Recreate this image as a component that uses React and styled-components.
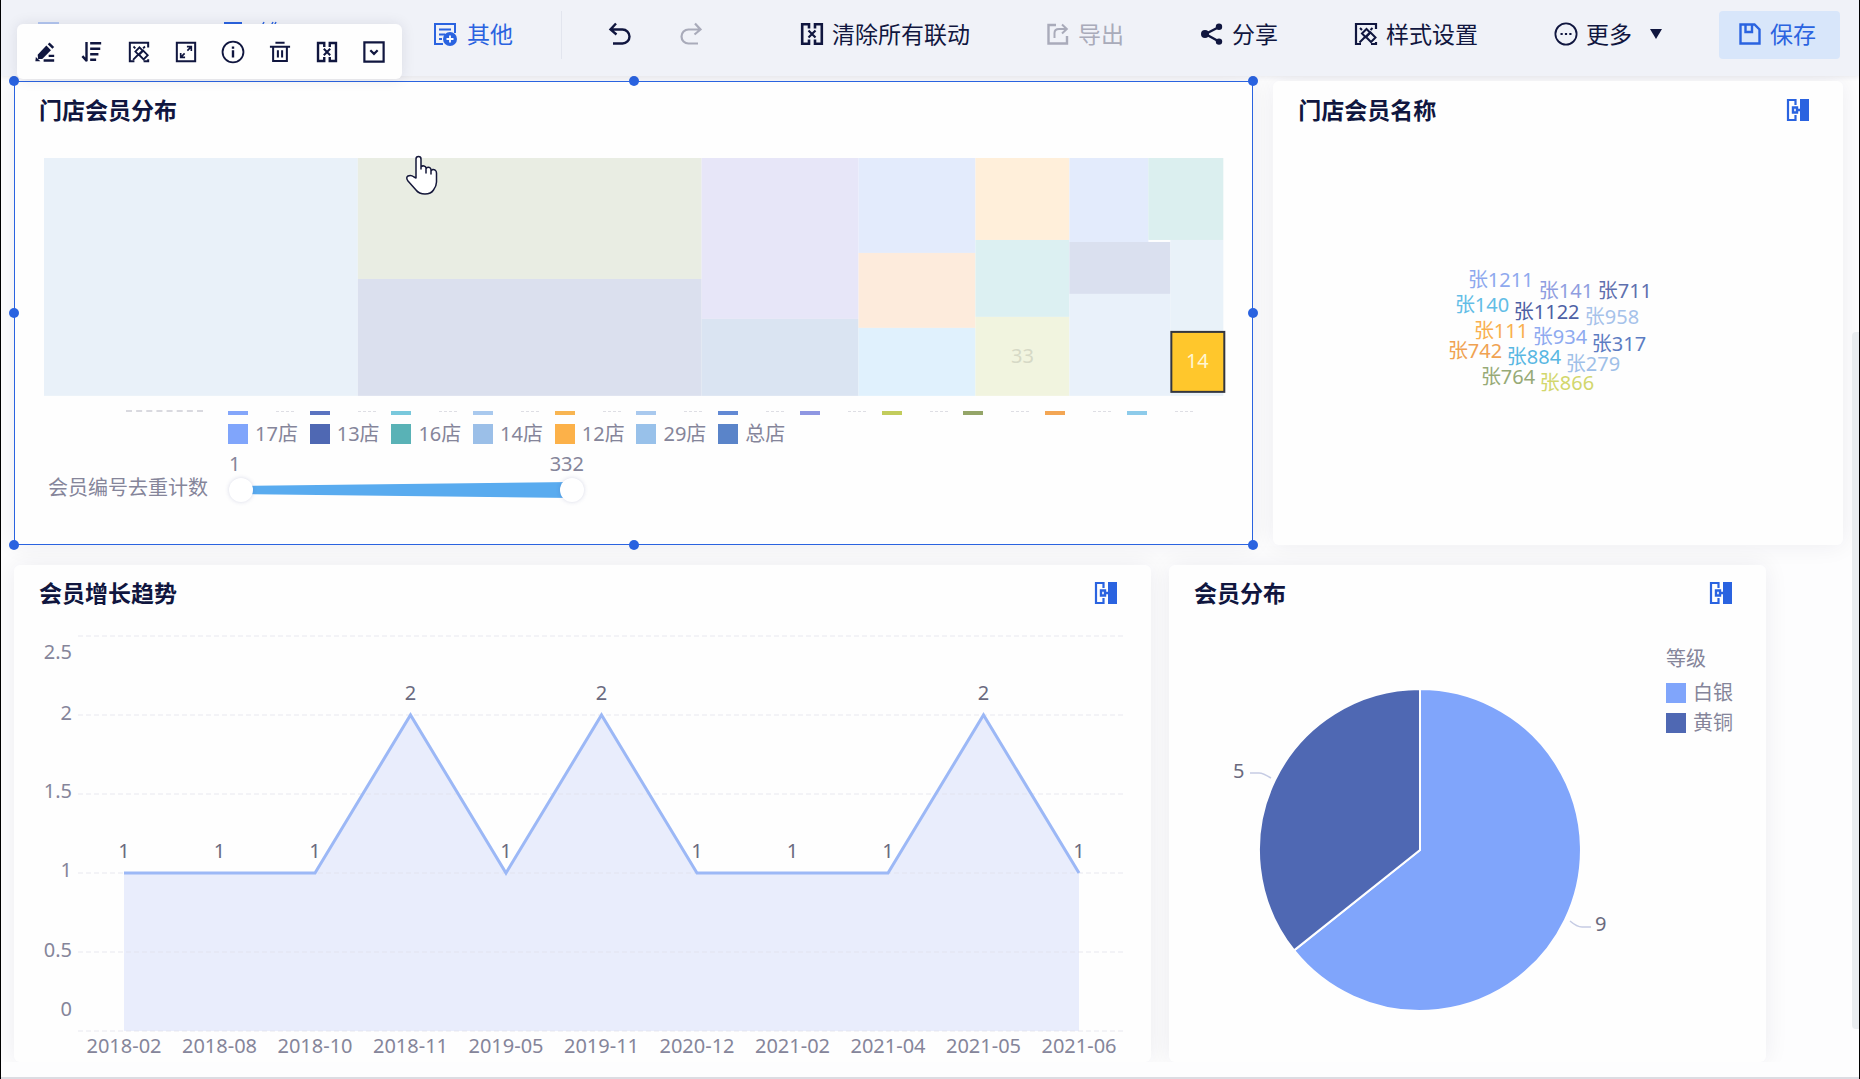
import React, { useState } from 'react'
import styled, { createGlobalStyle, css } from 'styled-components'

const NAVY = '#10163f'
const BLUE = '#2a63e0'
const FONT = `'Noto Sans', 'Noto Sans CJK SC', sans-serif`

const GlobalStyle = createGlobalStyle`
  * {
    box-sizing: border-box;
  }
  body {
    margin: 0;
    background: #fdfdfe;
    color: ${NAVY};
    font-family: ${FONT};
    font-size: 20px;
  }
  button {
    font-family: inherit;
  }
`

const Frame = styled.div`
  position: relative;
  display: flex;
  flex-direction: column;
  min-height: 100vh;
  border: solid #000;
  border-width: 0 1px;
  box-shadow: inset 0 -2px 0 #dcdce2;
`

/* toolbar */

const Toolbar = styled.header`
  position: relative;
  z-index: 1;
  display: flex;
  align-items: center;
  height: 76px;
  padding: 0 19px 6px 35px;
  background: #f0f2f8;
  box-shadow: 0 2px 4px rgba(30, 30, 70, 0.07);
`

const InsertGroup = styled.div`
  display: grid;
  grid-template-columns: 186px 211px auto;
`

const ActionGroup = styled.div`
  display: flex;
  align-items: center;
  gap: 38px;
  margin-left: auto;
`

const HistoryGroup = styled.div`
  display: flex;
  align-items: center;
  gap: 49px;
  padding: 0 39px 0 45px;
  border-left: 1px solid #e2e5ee;
`

const ToolButton = styled.button`
  display: flex;
  align-items: center;
  gap: ${p => (p.$flat ? 10 : 8)}px;
  height: 48px;
  padding: 0 ${p => (p.$flat ? 0 : 19)}px 2px;
  border: 0;
  border-radius: 4px;
  background: none;
  color: ${p => (p.$accent ? BLUE : NAVY)};
  font-size: 23px;
  line-height: 28px;
  white-space: nowrap;
  cursor: pointer;

  &:disabled {
    color: #a9abba;
    cursor: default;
  }
  ${p =>
    p.$filled &&
    css`
      background: #d8e6fa;
      padding-right: 24px;
    `}
`

const Svg = styled.svg`
  display: block;
  flex: none;
  overflow: visible;
  fill: none;
  stroke: currentColor;
  stroke-width: 2;
`

const Icon = ({ children, size = 24 }) => (
  <Svg width={size} height={size} viewBox='0 0 24 24' aria-hidden='true'>
    {children}
  </Svg>
)

const UnlinkIcon = ({ size }) => (
  <Icon size={size}>
    <path d='M9 6.5V2.2H2.2V21.8H9V17.5M15 6.5V2.2H21.8V21.8H15V17.5' strokeWidth='2.6' />
    <path d='M8.5 8.5L15.5 15.5M15.5 8.5L8.5 15.5' strokeWidth='2.2' />
  </Icon>
)

const StyleIcon = ({ size }) => (
  <Icon size={size}>
    <path d='M22 7V2H2V22H7M17 22H22V20' strokeWidth='2.2' />
    <path d='M8 11.5L12.5 7L16 10.5L11.5 15Z' />
    <path d='M12 15L16.5 10.5L21.5 15.5L17 20Z' />
    <path d='M11 15L5.5 20.5M16.5 8L18.5 6M6 6L8 8' />
  </Icon>
)

const OtherIcon = () => (
  <Icon>
    <path d='M22 11V2H2V22H10M6 7.5H18M6 12.5H12M6 17H9' />
    <circle cx='17' cy='17' r='7' fill='currentColor' stroke='none' />
    <path d='M17 13.5V20.5M13.5 17H20.5' stroke='#fff' strokeWidth='1.8' />
  </Icon>
)

const UndoIcon = () => (
  <Icon>
    <path d='M9 1.5L3.5 7.5L9.5 12.5M4 7.5H15.5A6.7 6.7 0 0 1 15.5 21.5H6' strokeWidth='2.4' />
  </Icon>
)

const RedoIcon = () => (
  <Icon>
    <path d='M15 1.5L20.5 7.5L14.5 12.5M20 7.5H8.5A6.7 6.7 0 0 0 8.5 21.5H18' strokeWidth='2.2' />
  </Icon>
)

const ExportIcon = () => (
  <Icon>
    <path d='M10 3H2.5V21.5H21V14' strokeWidth='2.4' />
    <path d='M8.5 16V11Q8.5 7 13 7H20M16 2.5L20.8 7L16 11.5' />
  </Icon>
)

const ShareIcon = () => (
  <Icon>
    <path d='M19 5L5.5 12L19 19.5' strokeWidth='2.4' />
    <g fill='currentColor' stroke='none'>
      <circle cx='19' cy='4.8' r='3.2' />
      <circle cx='5' cy='12' r='4' />
      <circle cx='19' cy='19.6' r='3.2' />
    </g>
  </Icon>
)

const MoreIcon = () => (
  <Icon>
    <circle cx='12' cy='12' r='10.6' strokeWidth='1.8' />
    <path d='M6.5 12H8.7M10.9 12H13.1M15.3 12H17.5' strokeWidth='2.2' />
  </Icon>
)

const SaveIcon = () => (
  <Icon>
    <path d='M2.5 2.5H16.5L21.5 7.5V21.5H2.5Z' strokeWidth='2.4' />
    <path d='M7.5 3V10H14V3' strokeWidth='2.4' />
  </Icon>
)

const LinkedIcon = () => (
  <Icon>
    <path d='M9.5 7V2H2V22H9.5V17' strokeWidth='2.2' />
    <path d='M7 9.5H11V14.5H7ZM11 12H15' strokeWidth='2.4' />
    <path d='M14 1H23V23H14Z' fill='currentColor' stroke='none' />
  </Icon>
)

const Caret = styled.span`
  margin-left: 10px;
  border: 6px solid transparent;
  border-top: 10px solid currentColor;
  border-bottom: 0;
`

/* floating menu of the selected card */

const FloatMenu = styled.div`
  position: absolute;
  z-index: 3;
  top: 24px;
  left: 16px;
  display: flex;
  gap: 25px;
  padding: 17px 17px 16px;
  border-radius: 6px;
  background: #fefefe;
  box-shadow: 0 0 14px rgba(30, 30, 60, 0.1);
`

const MenuButton = styled.button`
  padding: 0;
  border: 0;
  background: none;
  color: ${NAVY};
  cursor: pointer;
`

const MENU = [
  {
    label: '编辑',
    icon: (
      <g fill='currentColor' stroke='none'>
        <path d='M4 15L13.5 5L18.5 10L9 19.5L4.5 19.5Z' />
        <path d='M15 3.5L17 1.5L22 6.5L20 8.5Z' />
        <path d='M2 17.5L7 22H1.5Z' />
        <path d='M16 15H22V17.5H16ZM10.5 20H22V22.5H10.5Z' />
      </g>
    )
  },
  {
    label: '排序',
    icon: (
      <>
        <path d='M6 1V22M6.5 22L1.5 16.5' strokeWidth='2.6' />
        <path d='M10 2.5H22M10 8.5H21M10 14.5H19M10 20.5H16.5' strokeWidth='2.6' />
      </>
    )
  },
  { label: '样式', node: <StyleIcon size={22} /> },
  {
    label: '放大',
    icon: (
      <>
        <path d='M2 2H22V22H2Z' strokeWidth='2.2' />
        <path d='M13 6.2H17.8V11M17.5 6.5L13.5 10.5M11 17.8H6.2V13M6.5 17.5L10.5 13.5' strokeWidth='1.8' />
      </>
    )
  },
  {
    label: '信息',
    icon: (
      <>
        <circle cx='12' cy='12' r='11.4' />
        <path d='M12 10V18M12 6V8.4' strokeWidth='2.6' />
      </>
    )
  },
  {
    label: '删除',
    icon: (
      <path d='M7 2H17M1 6.2H23M4.5 6.5V21.8H19.5V6.5M9.7 10V18M14.3 10V18' strokeWidth='2.2' />
    )
  },
  { label: '清除联动', node: <UnlinkIcon size={22} /> },
  {
    label: '展开',
    icon: (
      <>
        <path d='M1.5 1.5H22.5V22.5H1.5Z' strokeWidth='2.4' />
        <path d='M8 10L12 14L16 10' strokeWidth='2.4' />
      </>
    )
  }
]

/* cards */

const Canvas = styled.main`
  display: flex;
  flex-direction: column;
  gap: 20px;
  padding: 5px 16px 0 13px;
  margin-bottom: 17px;
  overflow: hidden;
`

const Row = styled.div`
  display: grid;
  grid-template-columns: ${p => p.$columns};
  gap: ${p => p.$gap}px;
  margin-right: ${p => p.$indent || 0}px;
`

const CardBox = styled.section`
  position: relative;
  min-width: 0;
  border-radius: 6px;
  background: #fefefe;
  box-shadow: 0 0 24px rgba(20, 20, 50, 0.07);
`

const CardHead = styled.div`
  display: flex;
  align-items: center;
  justify-content: space-between;
  height: 57px;
  padding: 0 33px 0 25px;
`

const CardTitle = styled.h2`
  margin: 0;
  font-size: 23px;
  line-height: 32px;
  font-weight: 700;
`

const LinkedButton = styled(MenuButton)`
  color: ${BLUE};
`

const Selection = styled.div`
  position: absolute;
  inset: 0;
  outline: 1px solid ${BLUE};
  outline-offset: -1px;
  pointer-events: none;
`

const Handle = styled.i`
  position: absolute;
  left: ${p => p.$x};
  top: ${p => p.$y};
  width: 10px;
  height: 10px;
  margin: -5px;
  border-radius: 50%;
  background: ${BLUE};
`

const HANDLES = [
  ['0%', '0%'],
  ['50%', '0%'],
  ['100%', '0%'],
  ['0%', '50%'],
  ['100%', '50%'],
  ['0%', '100%'],
  ['50%', '100%'],
  ['100%', '100%']
]

const Card = ({ title, linked, selected, children }) => (
  <CardBox>
    <CardHead>
      <CardTitle>{title}</CardTitle>
      {linked && (
        <LinkedButton type='button' aria-label='联动'>
          <LinkedIcon />
        </LinkedButton>
      )}
    </CardHead>
    {children}
    {selected && (
      <Selection>
        {HANDLES.map(([x, y]) => (
          <Handle key={x + y} $x={x} $y={y} />
        ))}
      </Selection>
    )}
  </CardBox>
)

const Chart = styled.svg`
  display: block;
  width: 100%;
  height: auto;
  overflow: visible;
  font-family: ${FONT};
  font-size: 20px;
`

/* treemap */

const MapBody = styled.div`
  padding: 20px 30px 43px;
`

// x, y, width, height, colour
const TILES = [
  [0, 0, 314, 238, '#e9f1f9'],
  [314, 0, 344, 121, '#e9ede3'],
  [314, 121, 344, 117, '#dbe0ee'],
  [658, 0, 157, 161, '#e7e6f8'],
  [658, 161, 157, 77, '#dae4f2'],
  [815, 0, 117, 95, '#e3ebfc'],
  [815, 95, 117, 75, '#fdebdc'],
  [815, 170, 117, 68, '#e0f1fd'],
  [932, 0, 94, 82, '#ffefda'],
  [932, 82, 94, 77, '#dcf0f2'],
  [932, 159, 94, 79, '#f1f4df'],
  [1026, 0, 79, 84, '#e3ebfc'],
  [1105, 0, 75, 82, '#dbefef'],
  [1026, 84, 101, 52, '#dae0ef'],
  [1026, 136, 101, 102, '#e9f1fa'],
  [1127, 82, 53, 156, '#e9f2f9']
]

const Treemap = () => (
  <Chart viewBox='0 0 1180 238'>
    {TILES.map(([x, y, w, h, fill]) => (
      <rect key={`${x}-${y}`} x={x} y={y} width={w} height={h} fill={fill} />
    ))}
    <text x='979' y='205' textAnchor='middle' fill='#d6d9c6'>
      33
    </text>
    <rect x='1128' y='174' width='53' height='60' fill='#ffc72c' stroke='#33363f' strokeWidth='2' />
    <text x='1154' y='210' textAnchor='middle' fill='#fff6d2'>
      14
    </text>
  </Chart>
)

const LegendGrid = styled.div`
  display: grid;
  grid-template-columns: repeat(12, 1fr);
  margin: 0 15px 0 184px;
`

const ClippedLegend = styled(LegendGrid)`
  position: relative;
  height: 4px;
  margin-top: 15px;
  margin-bottom: 7px;
`

const Sliver = styled.span`
  position: relative;
  width: 20px;
  background: ${p => p.$color};

  &::after {
    content: '';
    position: absolute;
    left: 48px;
    top: 0;
    width: 18px;
    border-top: 1px dashed #dedee4;
  }
`

const ClippedTitle = styled.i`
  position: absolute;
  top: -1px;
  left: -102px;
  width: 77px;
  border-top: 2px dashed #d9d9df;
`

const LegendItem = styled.span`
  display: flex;
  align-items: center;
  gap: 7px;
  color: #85859a;
  line-height: 24px;
  white-space: nowrap;
`

const Swatch = styled.i`
  flex: none;
  width: 20px;
  height: 20px;
  background: ${p => p.$color};
`

const CLIPPED = [
  '#84a6fa',
  '#5a73c0',
  '#79c8dc',
  '#a9c9ee',
  '#f8b552',
  '#a9c9ee',
  '#6289d4',
  '#8f97e2',
  '#c2cc5c',
  '#94a568',
  '#f3a654',
  '#8dcbea'
]

const SHOPS = [
  ['17店', '#80a5fb'],
  ['13店', '#4f68b3'],
  ['16店', '#59b2b6'],
  ['14店', '#9bbfe8'],
  ['12店', '#fcb149'],
  ['29店', '#98c1ea'],
  ['总店', '#5a84c9']
]

const RangeRow = styled.div`
  display: flex;
  align-items: flex-end;
  margin: 4px 0 0 4px;
  color: #85859a;
  line-height: 28px;
`

const RangeLabel = styled.span`
  width: 181px;
`

const RangeScale = styled.div`
  display: flex;
  justify-content: space-between;
`

const RangeTrack = styled.div`
  position: relative;
  width: 355px;
  height: 24px;
`

const RangeInput = styled.input`
  position: absolute;
  inset: 0;
  width: 100%;
  height: 24px;
  margin: 0;
  appearance: none;
  background: none;
  pointer-events: none;

  &::-webkit-slider-thumb {
    appearance: none;
    width: 24px;
    height: 24px;
    border-radius: 50%;
    background: #fff;
    box-shadow: 0 0 4px rgba(60, 70, 140, 0.2);
    pointer-events: auto;
    cursor: pointer;
  }
`

function CountRange() {
  const [low, setLow] = useState(1)
  const [high, setHigh] = useState(332)
  return (
    <RangeRow>
      <RangeLabel id='count-label'>会员编号去重计数</RangeLabel>
      <div>
        <RangeScale>
          <span>{low}</span>
          <span>{high}</span>
        </RangeScale>
        <RangeTrack>
          <Svg width='355' height='24' viewBox='0 0 355 24'>
            <path d='M12 8L343 4V20L12 16Z' fill='#59abef' stroke='none' />
          </Svg>
          <RangeInput
            type='range'
            min='1'
            max='332'
            value={low}
            aria-labelledby='count-label'
            onChange={e => setLow(Math.min(+e.target.value, high))}
          />
          <RangeInput
            type='range'
            min='1'
            max='332'
            value={high}
            aria-labelledby='count-label'
            onChange={e => setHigh(Math.max(+e.target.value, low))}
          />
        </RangeTrack>
      </div>
    </RangeRow>
  )
}

/* word cloud */

const WORDS = [
  ['张1211', 195, 149, '#8ea9ee'],
  ['张141', 266, 160, '#8f9de0'],
  ['张711', 325, 160, '#5f70ae'],
  ['张140', 182, 174, '#62bde6'],
  ['张1122', 241, 181, '#4d60a4'],
  ['张958', 312, 186, '#a6c2ea'],
  ['张111', 201, 200, '#f9b04e'],
  ['张934', 260, 206, '#8eaaf0'],
  ['张317', 319, 213, '#5c7cc2'],
  ['张742', 175, 220, '#f0a252'],
  ['张884', 234, 226, '#58b7e2'],
  ['张279', 293, 233, '#9fc0e8'],
  ['张764', 208, 246, '#97aa76'],
  ['张866', 267, 252, '#d2d76c']
]

const WordCloud = () => (
  <Chart viewBox='0 0 570 406'>
    {WORDS.map(([word, x, y, fill]) => (
      <text key={word} x={x} y={y} fill={fill}>
        {word}
      </text>
    ))}
  </Chart>
)

/* trend */

const TREND = [
  ['2018-02', 1],
  ['2018-08', 1],
  ['2018-10', 1],
  ['2018-11', 2],
  ['2019-05', 1],
  ['2019-11', 2],
  ['2020-12', 1],
  ['2021-02', 1],
  ['2021-04', 1],
  ['2021-05', 2],
  ['2021-06', 1]
]

// value, label baseline
const TICKS = [
  [2.5, 37],
  [2, 98],
  [1.5, 176],
  [1, 255],
  [0.5, 335],
  [0, 394]
]

const trendX = i => 110 + (i * 955) / 10
const trendY = v => 409 - v * 158

function TrendChart() {
  const line = TREND.map(([, v], i) => `${trendX(i)},${trendY(v)}`).join(' ')
  return (
    <Chart viewBox='0 0 1137 440'>
      <polygon points={`110,409 ${line} 1065,409`} fill='#e9edfc' />
      {TICKS.map(([v, base]) => (
        <g key={v}>
          <line x1='64' x2='1111' y1={trendY(v)} y2={trendY(v)} stroke='#dfe0ea' strokeOpacity='.7' strokeDasharray='5 3' />
          <text x='58' y={base} textAnchor='end' fill='#85859a'>
            {v}
          </text>
        </g>
      ))}
      <polyline points={line} fill='none' stroke='#9cb8f6' strokeWidth='3' />
      {TREND.map(([date, v], i) => (
        <g key={date} textAnchor='middle'>
          <text x={trendX(i)} y={trendY(v) - 15} fill='#6a6a7e'>
            {v}
          </text>
          <text x={trendX(i)} y='431' fill='#85859a'>
            {date}
          </text>
        </g>
      ))}
    </Chart>
  )
}

/* pie */

const PieBody = styled.div`
  display: grid;
  grid-template-columns: 497fr 100fr;
`

const PieLegend = styled.div`
  display: flex;
  flex-direction: column;
  gap: 6px;
  padding-top: 25px;
  color: #85859a;
  line-height: 24px;
`

const PieLegendTitle = styled.span`
  margin-bottom: 4px;
`

const PieChart = () => (
  <Chart viewBox='0 0 497 440'>
    <g stroke='#fefefe' strokeWidth='2'>
      <path d='M251 228V67A161 161 0 1 1 125.1 328.4Z' fill='#80a5fb' />
      <path d='M251 228L125.1 328.4A161 161 0 0 1 251 67Z' fill='#4f68b3' />
    </g>
    <path d='M81 151H90Q94 151 102 156M401 299Q408 305 413 305H422' fill='none' stroke='#c6cce4' strokeWidth='1.5' />
    <text x='64' y='156' fill='#6a6a7e'>
      5
    </text>
    <text x='426' y='309' fill='#6a6a7e'>
      9
    </text>
  </Chart>
)

const Scrollbar = styled.div`
  position: absolute;
  right: 0;
  top: 332px;
  bottom: 50px;
  width: 7px;
  border-radius: 4px 0 0 4px;
  background: #e9ecef;
`

const Pointer = styled.svg`
  position: absolute;
  z-index: 4;
  top: 155px;
  left: 404px;
`

export default function App() {
  return (
    <Frame>
      <GlobalStyle />
      <Toolbar>
        <InsertGroup>
          <ToolButton type='button' $flat $accent aria-label='图表'>
            <Icon>
              <path d='M3 1H22V22H3Z' strokeOpacity='.3' />
            </Icon>
          </ToolButton>
          <ToolButton type='button' $flat $accent aria-label='控件'>
            <Icon>
              <path d='M3 1H19V22H3Z' />
            </Icon>
            <Icon>
              <path d='M8 0L6 4M17 0L15 4M20 0L18 4' strokeWidth='1.5' />
            </Icon>
          </ToolButton>
          <ToolButton type='button' $flat $accent>
            <OtherIcon />
            其他
          </ToolButton>
        </InsertGroup>
        <ActionGroup>
          <HistoryGroup>
            <ToolButton type='button' $flat aria-label='撤销'>
              <UndoIcon />
            </ToolButton>
            <ToolButton type='button' $flat disabled aria-label='重做'>
              <RedoIcon />
            </ToolButton>
          </HistoryGroup>
          <ToolButton type='button'>
            <UnlinkIcon />
            清除所有联动
          </ToolButton>
          <ToolButton type='button' disabled>
            <ExportIcon />
            导出
          </ToolButton>
          <ToolButton type='button'>
            <ShareIcon />
            分享
          </ToolButton>
          <ToolButton type='button'>
            <StyleIcon />
            样式设置
          </ToolButton>
          <ToolButton type='button'>
            <MoreIcon />
            更多
            <Caret />
          </ToolButton>
          <ToolButton type='button' $accent $filled>
            <SaveIcon />
            保存
          </ToolButton>
        </ActionGroup>
      </Toolbar>

      <FloatMenu>
        {MENU.map(item => (
          <MenuButton key={item.label} type='button' aria-label={item.label}>
            {item.node || <Icon size={22}>{item.icon}</Icon>}
          </MenuButton>
        ))}
      </FloatMenu>

      <Canvas>
        <Row $columns='1240fr 570fr' $gap={20}>
          <Card title='门店会员分布' selected>
            <MapBody>
              <Treemap />
              <ClippedLegend>
                <ClippedTitle />
                {CLIPPED.map((color, i) => (
                  <Sliver key={i} $color={color} />
                ))}
              </ClippedLegend>
              <LegendGrid>
                {SHOPS.map(([shop, color]) => (
                  <LegendItem key={shop}>
                    <Swatch $color={color} />
                    {shop}
                  </LegendItem>
                ))}
              </LegendGrid>
              <CountRange />
            </MapBody>
          </Card>
          <Card title='门店会员名称' linked>
            <WordCloud />
          </Card>
        </Row>
        <Row $columns='1137fr 597fr' $gap={18} $indent={77}>
          <Card title='会员增长趋势' linked>
            <TrendChart />
          </Card>
          <Card title='会员分布' linked>
            <PieBody>
              <PieChart />
              <PieLegend>
                <PieLegendTitle>等级</PieLegendTitle>
                <LegendItem>
                  <Swatch $color='#80a5fb' />
                  白银
                </LegendItem>
                <LegendItem>
                  <Swatch $color='#4f68b3' />
                  黄铜
                </LegendItem>
              </PieLegend>
            </PieBody>
          </Card>
        </Row>
      </Canvas>

      <Scrollbar />
      <Pointer width='34' height='40' viewBox='0 0 34 40' aria-hidden='true'>
        <path
          d='M11 23V4Q11 1.5 13.5 1.5Q16 1.5 16 4V14V12Q17 10.5 19 11Q21 11.5 21 13V18V14Q22 11.5 24.500 12.500Q26 13 26 15V19V16Q27.500 13.500 30 15Q31.500 16 31.500 18V27Q31.500 31 28.500 35Q26 39 20 39Q14 39 11 35L3 26Q0.500 22.500 3 21Q6 19.500 9 22Z'
          fill='#fff'
          stroke='#15183a'
          strokeWidth='1.5'
          strokeLinejoin='round'
        />
      </Pointer>
    </Frame>
  )
}
